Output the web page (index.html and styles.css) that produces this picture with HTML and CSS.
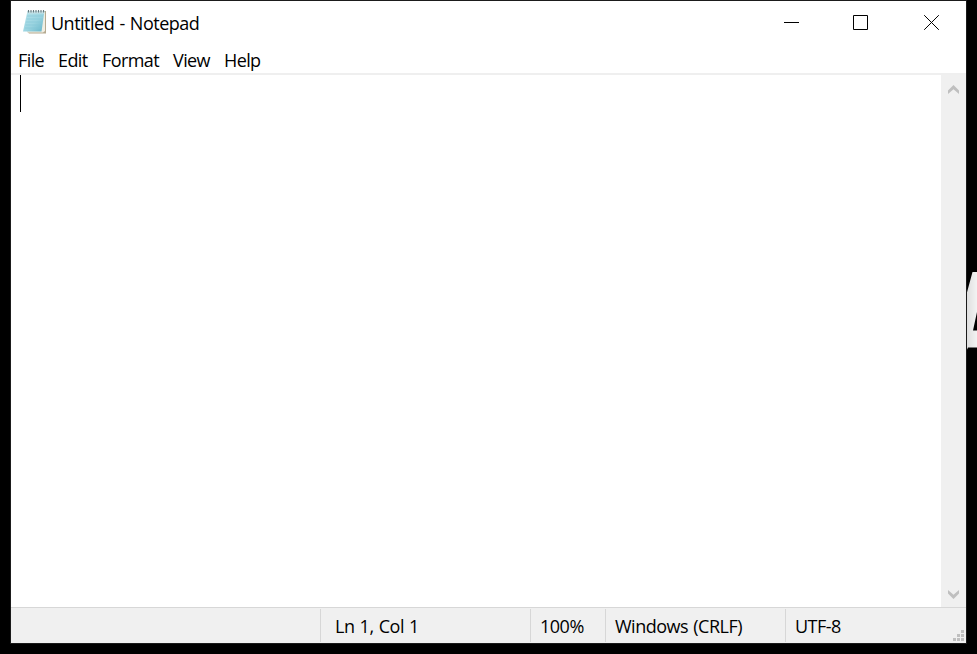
FILE: index.html
```html
<!DOCTYPE html>
<html lang="en">
<head>
<meta charset="utf-8">
<title>Untitled - Notepad</title>
<link rel="stylesheet" href="styles.css">
</head>
<body>
<svg class="wallpaper" width="11" height="78" viewBox="0 0 11 78">
  <defs><linearGradient id="sheen"><stop stop-color="#ddd"/><stop offset="1" stop-color="#f3f3f3"/></linearGradient></defs>
  <path d="M0 26 6.500 2H11V42L7 60.500H11V77.500H2L0 82Z" fill="url(#sheen)"/>
</svg>
<main class="window">
  <header class="titlebar">
    <svg class="app-icon" width="24" height="25" viewBox="0 0 24 25">
      <defs><linearGradient id="paper" x1="0" y1="0" x2="1" y2="1"><stop stop-color="#b9e4ec"/><stop offset=".55" stop-color="#9bd4e0"/><stop offset="1" stop-color="#64b4c8"/></linearGradient></defs>
      <path d="M7 2H23V24.500H6L4 22.500Z" fill="#b5aa90"/>
      <path d="M6 3H22V22L20 23.500H4Z" fill="#f1eee2"/>
      <path d="M4.500 2H21.500L18.500 22.500H0Z" fill="url(#paper)"/>
      <path d="M4.500 2H21.500L21 4.500H4Z" fill="#c8e3e8"/>
      <path d="M4 7H20M3.600 10H19.500M3 13H19M2.500 16H18.700M2 19H18" stroke="#85c6d6" stroke-width=".6"/>
      <path d="M5.500 1v2.500M8 1v2.500M10.500 1v2.500M13 1v2.500M15.500 1v2.500M18 1v2.500M20.500 1v2.500" stroke="#66797e" stroke-width="1.100"/>
    </svg>
    <h1 class="title">Untitled - Notepad</h1>
    <div class="controls">
      <svg width="15" height="15" viewBox="0 0 15 15"><path d="M0 7.500H15" stroke="#000"/></svg>
      <svg width="15" height="15" viewBox="0 0 15 15"><path d="M.5 .5H14.500V14.500H.5Z" fill="none" stroke="#000"/></svg>
      <svg width="15" height="15" viewBox="0 0 15 15"><path d="M.2 .2 14.800 14.800M14.800 .2 .2 14.800" stroke="#000"/></svg>
    </div>
  </header>
  <nav class="menu">
    <span class="file">File</span><span class="edit">Edit</span><span class="format">Format</span><span class="view">View</span><span>Help</span>
  </nav>
  <section class="editor">
    <div class="page"><div class="caret"></div></div>
    <div class="scrollbar">
      <svg width="11" height="9" viewBox="0 0 11 9"><path d="M0 5.500 5.500 0 11 5.500V9L5.500 4.200 0 9Z" fill="#bfbfbf"/></svg>
      <svg width="11" height="9" viewBox="0 0 11 9"><path d="M0 0 5.500 4.800 11 0V3.500L5.500 9 0 3.500Z" fill="#bfbfbf"/></svg>
    </div>
  </section>
  <footer class="status">
    <div class="blank"></div>
    <div class="position"><span>Ln 1, Col 1</span></div>
    <div class="zoom"><span>100%</span></div>
    <div class="ending"><span>Windows (CRLF)</span></div>
    <div class="encoding"><span>UTF-8</span>
      <svg class="grip" width="11" height="11" viewBox="0 0 11 11"><path d="M8 0h3v3h-3zM4 4h3v3h-3zM8 4h3v3h-3zM0 8h3v3h-3zM4 8h3v3h-3zM8 8h3v3h-3z" fill="#bfbfbf"/></svg>
    </div>
  </footer>
</main>
</body>
</html>
```
FILE: styles.css
```css
* { box-sizing: border-box; }
body {
  margin: 0;
  height: 654px;
  padding-left: 10px;
  overflow: hidden;
  background: #000;
  color: #000;
  font: 18px/24px "Open Sans", "Noto Sans", sans-serif;
  letter-spacing: -0.5px;
  word-spacing: 1px;
}
svg { display: block; flex: none; }
.wallpaper { position: absolute; left: 966px; top: 270px; overflow: visible; }
.window {
  position: relative;
  display: flex;
  flex-direction: column;
  width: 957px;
  height: 644px;
  border: 1px solid #1b1b1b;
  background: #fff;
  white-space: nowrap;
}
.titlebar { display: flex; height: 46px; padding: 8px 27px 0 12px; }
.title { margin: 2px 0 0 4px; font: inherit; }
.controls { display: flex; margin: 6px 0 0 auto; }
.controls svg + svg { margin-left: 54px; }
.controls svg:last-child { margin-left: 56px; }
.menu { display: flex; height: 28px; padding: 1px 0 0 7px; border-bottom: 2px solid #efefef; letter-spacing: -0.6px; }
.file { width: 40px; }
.edit { width: 44px; }
.format { width: 71px; }
.view { width: 51px; }
.editor { display: flex; flex: 1; }
.page { flex: 1; padding-left: 9px; }
.caret { width: 1px; height: 37px; background: #000; }
.scrollbar {
  display: flex;
  flex-direction: column;
  justify-content: space-between;
  align-items: center;
  width: 25px;
  padding: 10px 0 8px;
  background: #f0f0f0;
}
.status { display: flex; height: 36px; padding: 1px 0; border-top: 1px solid #d7d7d7; background: #f0f0f0; }
.status > div { padding-top: 5px; }
.status > div + div { border-left: 1px solid #d7d7d7; }
.status > .blank { width: 309px; }
.status > .position { width: 210px; padding-left: 14px; }
.status > .zoom { width: 75px; padding-left: 9px; }
.status > .ending { width: 180px; padding-left: 9px; }
.status > .encoding { flex: 1; padding-left: 9px; }
.grip { position: absolute; right: 2px; bottom: 2px; }
```
